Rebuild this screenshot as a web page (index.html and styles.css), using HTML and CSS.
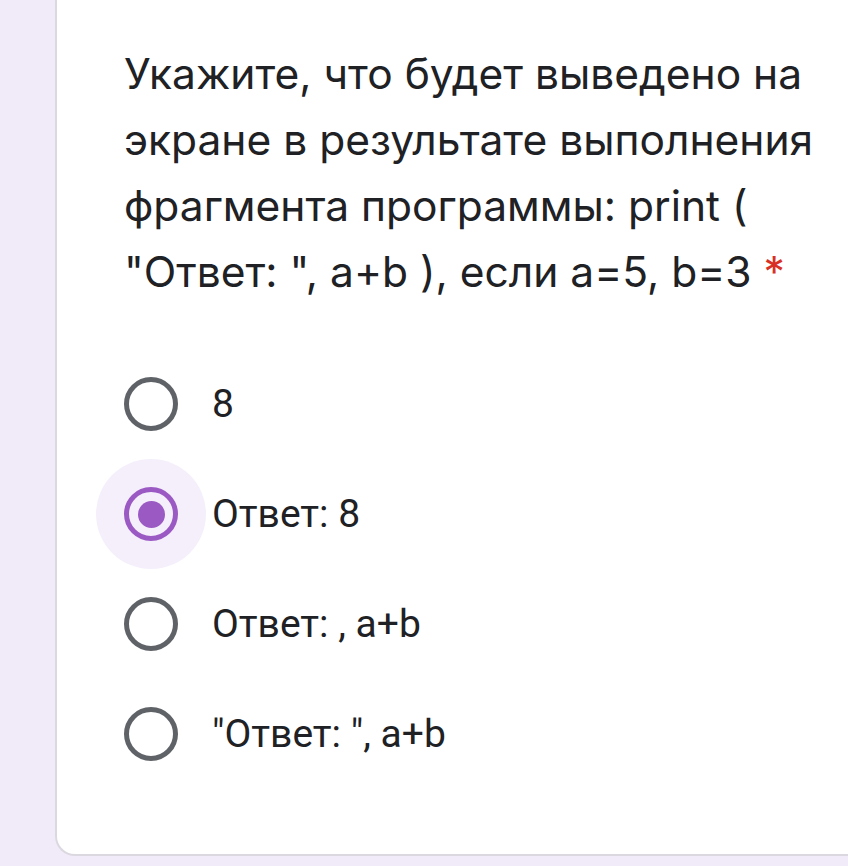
FILE: index.html
```html
<!DOCTYPE html>
<html lang="ru">
<head>
<meta charset="utf-8">
<link rel="stylesheet" href="styles.css">
</head>
<body>
<div class="card">
  <div class="question">Укажите, что будет выведено на экране в результате выполнения фрагмента программы: print ( "Ответ: ", a+b ), если a=5, b=3 <span class="req">*</span></div>
  <div class="options">
    <div class="option"><span class="radio-wrap"><span class="radio"></span></span><span class="label">8</span></div>
    <div class="option"><span class="radio-wrap checked"><span class="radio"><span class="dot"></span></span></span><span class="label">Ответ: 8</span></div>
    <div class="option"><span class="radio-wrap"><span class="radio"></span></span><span class="label">Ответ: , a+b</span></div>
    <div class="option"><span class="radio-wrap"><span class="radio"></span></span><span class="label">"Ответ: ", a+b</span></div>
  </div>
</div>
</body>
</html>
```
FILE: styles.css
```css
html, body {
  margin: 0;
  padding: 0;
  background: #f1ebf9;
  overflow: hidden;
}
body {
  height: 866px;
}
.card {
  margin-left: 55px;
  height: 856px;
  box-sizing: border-box;
  background: #fff;
  border-left: 2px solid #dcd8e0;
  border-bottom: 2px solid #dcd8e0;
  border-bottom-left-radius: 20px;
  padding: 41px 0 0 67px;
}
.question {
  font-family: Inter, "Open Sans", sans-serif;
  font-size: 42.5px;
  line-height: 66px;
  color: #202124;
  width: 720px;
}
.req {
  color: #d93025;
}
.options {
  margin-top: 44px;
  display: flex;
  flex-direction: column;
  margin-left: -28px;
}
.option {
  display: flex;
  align-items: center;
  height: 110px;
}
.radio-wrap {
  width: 110px;
  height: 110px;
  border-radius: 50%;
  display: flex;
  align-items: center;
  justify-content: center;
  flex: none;
}
.radio-wrap.checked {
  background: #f5effb;
}
.radio {
  width: 54px;
  height: 54px;
  box-sizing: border-box;
  border: 5px solid #5f6368;
  border-radius: 50%;
  display: flex;
  align-items: center;
  justify-content: center;
}
.checked .radio {
  border-color: #9b59c4;
}
.dot {
  width: 27px;
  height: 27px;
  border-radius: 50%;
  background: #9b59c4;
}
.label {
  font-family: Roboto, sans-serif;
  font-size: 39px;
  color: #202124;
  margin-left: 6px;
}
```
